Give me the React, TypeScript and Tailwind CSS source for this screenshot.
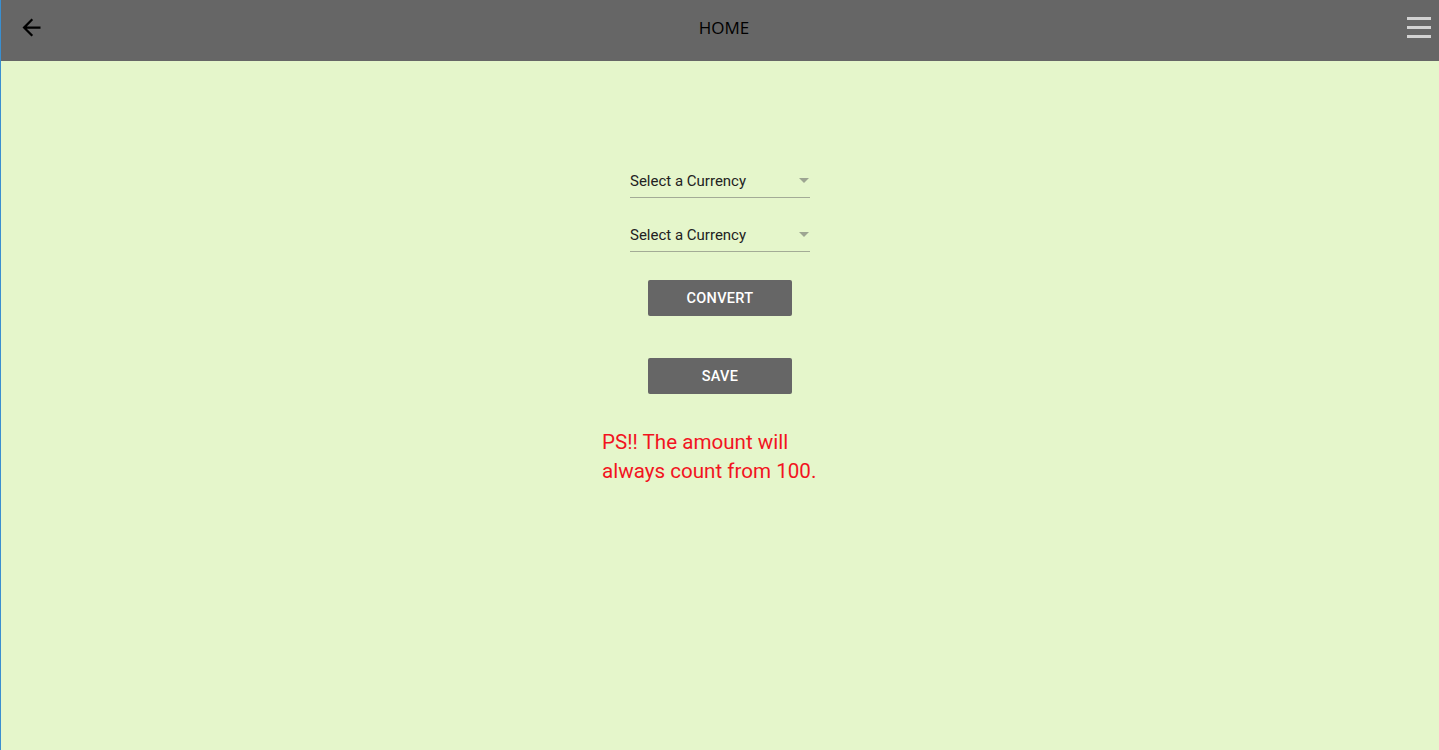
function CurrencySelect() {
  return (
    <div className="w-[180px] h-[34px] flex items-center justify-between border-b border-[#a3ab96]">
      <span className="text-[15px] text-[#222] pt-[1px]">Select a Currency</span>
      <span className="w-0 h-0 mr-[1px] border-l-[5px] border-r-[5px] border-t-[5px] border-l-transparent border-r-transparent border-t-[#9da592]" />
    </div>
  );
}

export default function App() {
  return (
    <div className="min-h-screen h-[750px] flex flex-col bg-[#e5f6cb] border-l border-[#3a8fd0] font-['Roboto',sans-serif]">
      <header className="h-[61px] shrink-0 flex items-center justify-between bg-[#666666] pl-[17px] pr-[8px] pb-[6px]">
        <svg viewBox="0 0 24 24" className="w-[27px] h-[27px]" fill="#000">
          <path d="M20 11H7.83l5.59-5.59L12 4l-8 8 8 8 1.41-1.41L7.83 13H20v-2z" />
        </svg>
        <h1 className="text-[17px] text-black font-['Open_Sans',sans-serif] pr-[4px]">HOME</h1>
        <div className="flex flex-col gap-[6px] w-[24px]">
          <span className="h-[3px] bg-[#d2d2d2]" />
          <span className="h-[3px] bg-[#d2d2d2]" />
          <span className="h-[3px] bg-[#d2d2d2]" />
        </div>
      </header>

      <main className="flex flex-col items-center pt-[103px]">
        <CurrencySelect />
        <div className="mt-[20px]">
          <CurrencySelect />
        </div>
        <button className="mt-[28px] w-[144px] h-[36px] pt-[1px] rounded-[2px] bg-[#666666] text-white text-[14.5px] font-medium tracking-[0.3px]">
          CONVERT
        </button>
        <button className="mt-[42px] w-[144px] h-[36px] pt-[1px] rounded-[2px] bg-[#666666] text-white text-[14.5px] font-medium tracking-[0.3px]">
          SAVE
        </button>
        <p className="mt-[34px] w-[236px] text-[20.6px] leading-[29px] text-[#f2141f]">
          PS!! The amount will always count from 100.
        </p>
      </main>
    </div>
  );
}
